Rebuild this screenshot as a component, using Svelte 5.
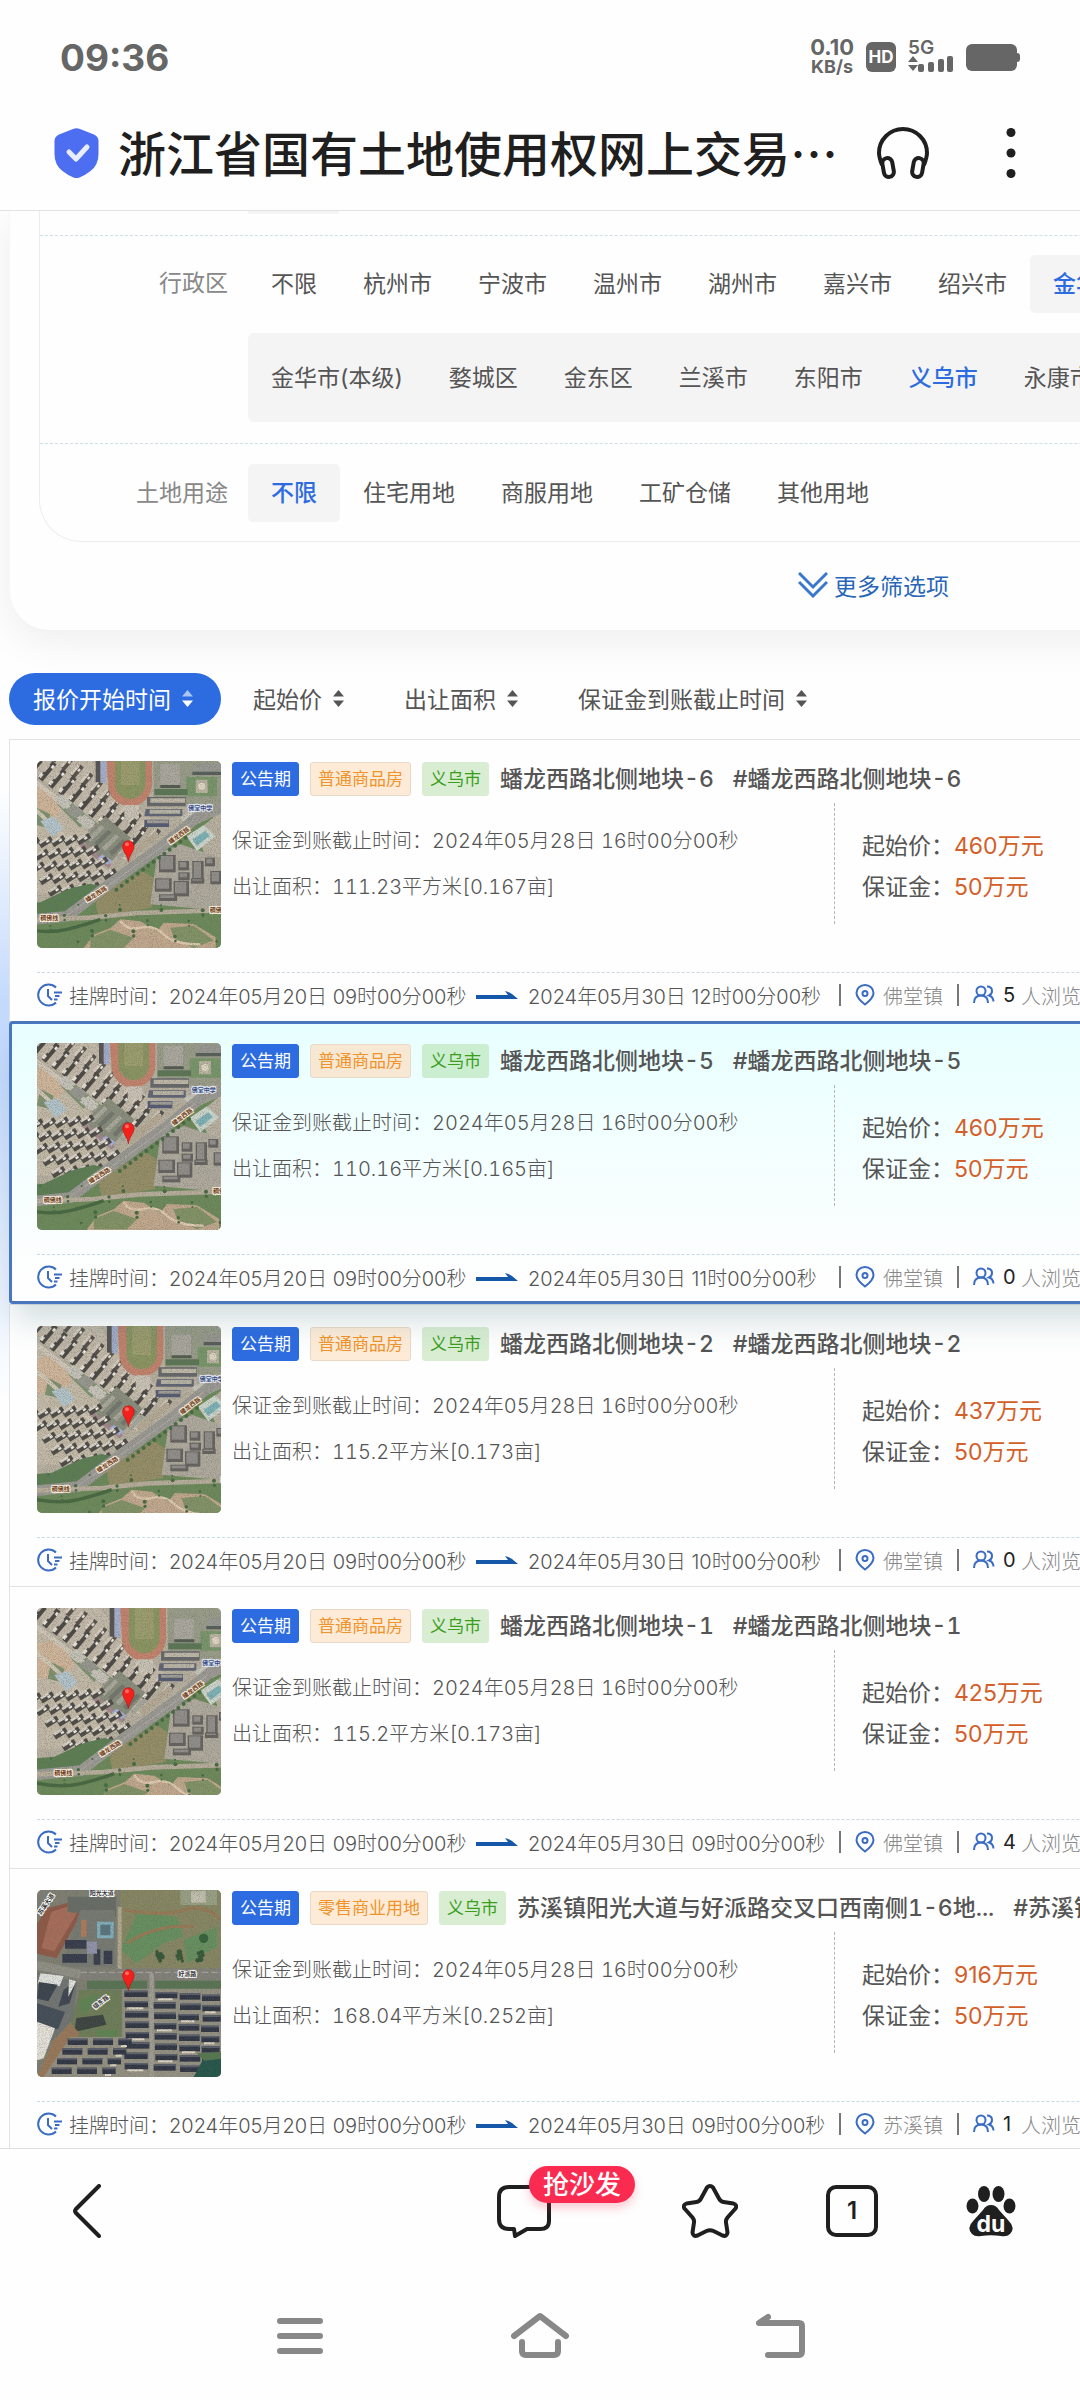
<script>
  const cities = ['不限', '杭州市', '宁波市', '温州市', '湖州市', '嘉兴市', '绍兴市', '金华市'];
  const districts = ['金华市(本级)', '婺城区', '金东区', '兰溪市', '东阳市', '义乌市', '永康市'];
  const uses = ['不限', '住宅用地', '商服用地', '工矿仓储', '其他用地'];
  const sorts = ['报价开始时间', '起始价', '出让面积', '保证金到账截止时间'];

  let city = $state('金华市');
  let district = $state('义乌市');
  let use = $state('不限');
  let sort = $state('报价开始时间');

  const lots = [
    { kind: '普通商品房', title: '蟠龙西路北侧地块-6', sub: '#蟠龙西路北侧地块-6', area: '111.23平方米[0.167亩]', price: '460', end: '12', town: '佛堂镇', views: 5, view: '0 0 552 561' },
    { kind: '普通商品房', title: '蟠龙西路北侧地块-5', sub: '#蟠龙西路北侧地块-5', area: '110.16平方米[0.165亩]', price: '460', end: '11', town: '佛堂镇', views: 0, view: '-10 2 552 561', active: true },
    { kind: '普通商品房', title: '蟠龙西路北侧地块-2', sub: '#蟠龙西路北侧地块-2', area: '115.2平方米[0.173亩]', price: '437', end: '10', town: '佛堂镇', views: 0, view: '-34 -16 552 561' },
    { kind: '普通商品房', title: '蟠龙西路北侧地块-1', sub: '#蟠龙西路北侧地块-1', area: '115.2平方米[0.173亩]', price: '425', end: '09', town: '佛堂镇', views: 4, view: '-42 -22 552 561' },
    { kind: '零售商业用地', title: '苏溪镇阳光大道与好派路交叉口西南侧1-6地...', sub: '#苏溪镇阳光大道与好派路交叉口西南侧1-6地块', area: '168.04平方米[0.252亩]', price: '916', end: '09', town: '苏溪镇', views: 1, view: '0 0 552 561', south: true }
  ];

  const range = (n) => Array.from({ length: n }, (_, i) => i);
  const blocks = [];
  for (const r of range(8)) {
    for (const c of range(4)) {
      const left = [262, 350, 424, 492][c];
      blocks.push([left + ((r * 7 + c * 5) % 6), 302 + r * 31 + c * 4, [70, 66, 62, 54][c]]);
    }
  }
  for (const r of range(4)) {
    for (const c of range(3)) blocks.push([92 - r * 16 + c * 76, 446 + r * 29, c === 2 ? 40 : 60]);
  }
</script>

{#snippet pin()}
  <path d="M274 302c-3-22-17-30-17-46a17 17 0 0 1 34 0c0 16-14 24-17 46z" fill="#f3201c" stroke="#b41412" stroke-width="2" />
  <circle cx="270" cy="250" r="6" fill="#ff6a62" />
{/snippet}

{#snippet roadMap(view)}
  <svg class="map" viewBox={view} preserveAspectRatio="xMidYMid slice" role="img" aria-label="地块卫星图">
    <rect x="-60" y="-60" width="680" height="700" fill="#b8b1a1" />
    <path d="M-60 20L0 70l120 110 90 100-60 80-90 40L-60 400z" fill="#c4baa8" />
    <path d="M-50 90l60-20 70 60-30 50-100 10z" fill="#d0b69b" />
    <path d="M60 130l40-30 60 60-30 40zM150 170l40-18 60 50-20 40zM0 140l40 20-10 40-40-10z" fill="#7f9270" />
    <path d="M-60-10L0 42l255 205 95-70-60-40L110-60H-60z" fill="#c4baaa" />
    {#each range(13) as i}
      <g transform="translate({-58 + i * 30} {-36 + i * 22}) rotate(-50)">
        <rect x="-34" y="-8" width="66" height="16" fill="#4b4743" />
        <rect x="-30" y="-12" width="14" height="10" fill="#e8e2d8" />
        <rect x="-8" y="-14" width="26" height="10" fill="#c6bdb1" />
        <rect x="14" y="0" width="10" height="8" fill="#f0ece4" />
      </g>
      <g transform="translate({6 + i * 29} {-66 + i * 24}) rotate(-50)">
        <rect x="-24" y="-6" width="44" height="13" fill="#57514b" />
        <rect x="-20" y="-12" width="34" height="8" fill="#d8cec0" />
        <rect x="0" y="-2" width="9" height="7" fill="#ece6dc" />
      </g>
    {/each}
    <path d="M-60 22L0 66l100 78 170 150" fill="none" stroke="#d0c7b8" stroke-width="14" />
    <path d="M-60 100L0 150l90 85 130 110" fill="none" stroke="#d0c7b6" stroke-width="12" />
    {#each range(5) as i}
      <path d="M{50 + i * 34} {118 + i * 30}l26-18 32 26-28 18z" fill={i % 2 ? '#979990' : '#c6c4ba'} />
    {/each}
    <path d="M135 238l70-72 78 66-72 84z" fill="#8a8e7d" />
    {#each range(5) as i}
      <path d="M{150 + i * 22} {232 + i * 14}l42-40 10 8-42 42z" fill={i % 2 ? '#73776e' : '#a9a89c'} />
    {/each}
    <path d="M128 255l86 66 10-10-88-68z" fill="#a3868a" />
    <path d="M182 292l30 20 14-12-30-20z" fill="#a8b1da" />
    <path d="M10 180l40-14 30 36-34 26z" fill="#b4c5cc" />
    {#each range(5) as r}
      {#each range(6) as c}
        <g transform="translate({-50 + c * 38 + r * 26} {250 + r * 35 - c * 3}) rotate(-32)">
          <rect x="-20" y="-9" width="42" height="17" fill="#4d4a46" />
          <rect x="-17" y="-12" width="28" height="8" fill="#d8d1c6" />
          <rect x="2" y="-3" width="10" height="7" fill="#f2eee7" />
        </g>
      {/each}
    {/each}
    <path d="M205-60h140V70a66 66 0 0 1-132 0z" fill="#c4836d" />
    <path d="M234-60h92V68a46 46 0 0 1-92 0z" fill="#8b9562" />
    <path d="M252-60h56V72h-56z" fill="#9c9e6e" />
    <path d="M190-60h18V66h-18z" fill="#a4afce" />
    <path d="M176-60h14V64h-14z" fill="#555353" />
    <path d="M262 132h44v40h-44z" fill="#cbc4b7" />
    <path d="M350-60h260V130H350z" fill="#999d89" />
    <path d="M370 10h58v62h-58z" fill="#aba89f" /><path d="M370 72h60v9h-60z" fill="#535a50" />
    <path d="M448 48h92v58h-92z" fill="#78966a" />
    <path d="M476 56h36v40h-36z" fill="#b8b4a0" /><circle cx="494" cy="76" r="11" fill="#e0d8c4" />
    <path d="M470 8h90v30h-90z" fill="#999993" /><path d="M466 32h90v10h-90z" fill="#565e5a" />
    <path d="M352 84h100v18H352z" fill="#5b7655" />
    <path d="M330 108h116v28H330z" fill="#66676a" /><path d="M340 112h104v13H340z" fill="#c0b9aa" />
    <path d="M326 144h110v22H322z" fill="#606474" /><path d="M338 146h92v12h-92z" fill="#b8b4a6" />
    <path d="M322 176h74v22h-74z" fill="#545a72" /><path d="M330 178h64v9h-64z" fill="#a29e98" />
    <path d="M430 168l60-30h60v24l-90 50z" fill="#c7c4ba" />
    <path d="M-60 480l130-10 145-85L370 275l110-86 130-60v460H-60z" fill="#6c8a5a" />
    <path d="M175 420l70-50 70-40 35 20-6 90-160 26z" fill="#958e66" />
    <path d="M-60 430l70-6 90-42 60-14 50 10-90 70-60 18-120 6z" fill="#5c7e53" />
    <path d="M480 210l72-60h60v190h-92z" fill="#bab2a2" />
    <path d="M360 280l70-30 120 40 60 0v110l-50 50-220-20z" fill="#b0ab9e" />
    {#each [[366, 282, 50, 52], [424, 300, 32, 28], [424, 334, 34, 24], [466, 300, 34, 60], [504, 290, 30, 26], [354, 352, 50, 40], [410, 360, 46, 46], [366, 400, 54, 20], [462, 352, 40, 16], [520, 330, 34, 40]] as b}
      <rect x={b[0]} y={b[1]} width={b[2]} height={b[3]} fill="#65625f" />
      <rect x={b[0] + 4} y={b[1] + 3} width={b[2] - 12} height={b[3] - 12} fill="#928e8b" />
    {/each}
    <path d="M448 226l52-34 36 34-56 44z" fill="#cdd6cd" /><path d="M466 236l38-26 14 14-38 30z" fill="#7db2b6" />
    <path d="M-60 480l150-14L230 360 380 252l96-80 140-60" fill="none" stroke="#9c9a94" stroke-width="32" />
    <path d="M80 470L230 362 380 254l90-76" fill="none" stroke="#bdbab2" stroke-width="2" />
    <path d="M262 286l92-74 12 14-90 76z" fill="#b6aa96" />
    <path d="M-60 478l220-8 140-14 310-10" fill="none" stroke="#b8ae9c" stroke-width="14" />
    <path d="M-60 500q90 20 150 5t100-30" fill="none" stroke="#466840" stroke-width="10" />
    <path d="M140 561l30-40 50-20 30-26 60 6 50 30 20-26 90 4 66 40v100H140z" fill="#c2a98d" />
    <path d="M160 530l60-24 70 24-30 31H160zM400 500l70-6 60 44-60 23-60-30z" fill="#829366" />
    <path d="M250 480q20 30 60 20t70 20 110 30" fill="none" stroke="#e0cbb0" stroke-width="7" />
    {#each range(26) as i}
      <circle cx={(i * 83) % 540} cy={430 + ((i * 47) % 125)} r={3 + (i % 4)} fill="#466a42" />
    {/each}
    {#each range(14) as i}
      <circle cx={238 + i * 16} cy={386 - i * 12} r="6" fill="#466a42" />
    {/each}
    <rect class="grain" x="-60" y="-60" width="680" height="700" filter="url(#grain)" />
    <g class="road">
      <text transform="translate(400 250) rotate(-36)">蟠龙西路</text>
      <text transform="translate(150 424) rotate(-32)">蟠龙西路</text>
      <text x="10" y="478">稠佛线</text>
      <text x="518" y="452">稠佛线</text>
      <text class="school" x="454" y="148">佛堂中学</text>
    </g>
    <svg x={view.split(' ')[0]} y={view.split(' ')[1]} width="552" height="561" viewBox="0 0 552 561">{@render pin()}</svg>
  </svg>
{/snippet}

{#snippet townMap()}
  <svg class="map" viewBox="0 0 552 561" preserveAspectRatio="xMidYMid slice" role="img" aria-label="地块卫星图">
    <rect width="552" height="561" fill="#7f8073" />
    <path d="M250 0h302v235H250z" fill="#878763" />
    <path d="M300 70l120 10 20 60-60 20-80 60-50-40zM440 150l100-40v60l-90 50z" fill="#66905f" />
    <path d="M262 60q120 20 180 0t110 30M270 160q90-60 200-50" fill="none" stroke="#977a56" stroke-width="9" />
    <path d="M430 0h110v45H430z" fill="#98a184" /><path d="M462 4h44v34h-44z" fill="#c4c1b1" />
    <path d="M30 55l75-20 34 25-80 145-59-14v-90z" fill="#8f5947" />
    <path d="M42 66l56-18 24 18-70 118-38-10z" fill="#a86d5a" />
    <path d="M92 20h145v60L92 66z" fill="#676d66" />
    <path d="M130 60h104v170H70l20-50z" fill="#777a73" />
    <path d="M180 95h50v50h-50z" fill="#81b1be" /><path d="M190 104h30v32h-30z" fill="#58757d" />
    <path d="M84 150h64v26H84zM76 192h74v26H76zM170 178h20v46h-20zM200 182h26v40h-26z" fill="#363b4b" />
    <path d="M150 155h30v36h-30z" fill="#9294ae" /><path d="M132 90h16v50h-16z" fill="#ad7b59" />
    <path d="M248 50v190" stroke="#b2a890" stroke-width="12" />
    <path d="M0 236h552v34H120L0 240z" fill="#82827a" />
    <path d="M130 247h422" stroke="#b0aea2" stroke-width="3" stroke-dasharray="20 8" />
    <path d="M0 225l130 28" stroke="#929187" stroke-width="26" />
    <path d="M150 272h180v26H150zM355 272h197v30H355z" fill="#597453" />
    <path d="M0 246l120 30-10 110L0 500z" fill="#717573" />
    <path d="M10 250l70 8-12 30-66-8z" fill="#e2e4e0" /><path d="M6 276l56 8-28 50-34-8z" fill="#3b434d" />
    <path d="M80 300l38-30-20 70-34 10z" fill="#3e4550" /><path d="M96 268l22 6-24 46z" fill="#e6e6e0" />
    <path d="M0 340l84 26-20 50L0 430z" fill="#434d58" />
    <path d="M0 395l54 20-34 90-20 6z" fill="#e6e3db" />
    <path d="M128 300h126v150H90z" fill="#6e7e58" />
    <path d="M126 330l60-20-46 70zM180 420h60v22h-60z" fill="#5f8453" />
    <path d="M118 384l80-10 10 30-96 22z" fill="#3c4340" />
    <path d="M100 400l28 30-90 131H0l50-110z" fill="#997859" />
    <path d="M256 296h296v265H20l80-120h156z" fill="#959284" />
    <path d="M344 250v311" stroke="#a19e95" stroke-width="13" />
    {#each blocks as [x, y, w], i}
      <rect {x} {y} width={w} height="19" fill="#303544" />
      <rect {x} {y} width={w} height="5" fill="#5b606d" />
      {#if i % 3 === 1}<rect x={x + 8} y={y + 19} width={w - 22} height="6" fill="#e0d8c8" />{/if}
    {/each}
    <path d="M552 495l-50 6-32 60h82z" fill="#23554a" />
    <path d="M480 490l72-4v20l-50 6z" fill="#56784e" />
    {#each range(18) as i}
      <circle cx={360 + ((i * 61) % 180)} cy={185 + ((i * 13) % 30)} r={5 + (i % 4)} fill="#345636" />
    {/each}
    <circle cx="500" cy="145" r="14" fill="#356239" />
    <rect class="grain" width="552" height="561" filter="url(#grain)" />
    <g class="road plain">
      <text x="424" y="258">好派路</text>
      <text transform="translate(174 358) rotate(-38)">镇东路</text>
      <text transform="translate(12 76) rotate(-56)">苏溪大道</text>
      <text x="158" y="16">阳光大道</text>
    </g>
    {@render pin()}
  </svg>
{/snippet}

{#snippet sorter()}
  <svg class="sorter" viewBox="0 0 11 17" aria-hidden="true"><path class="up" d="M5.5 0L11 6.500H0z" /><path d="M5.500 17L0 10.500h11z" /></svg>
{/snippet}

<svg class="defs" aria-hidden="true">
  <filter id="grain" x="0" y="0" width="100%" height="100%">
    <feTurbulence type="fractalNoise" baseFrequency="0.35" numOctaves="3" seed="4" />
    <feColorMatrix values="0 0 0 0 0.12  0 0 0 0 0.12  0 0 0 0 0.1  2.4 0 0 0 -1" />
  </filter>
</svg>

<div class="app" lang="zh-CN">
  <div class="status">
    <time>09:36</time>
    <div class="signals">
      <span class="speed"><span>0.10</span><span>KB/s</span></span>
      <span class="hd">HD</span>
      <span class="cell">
        <span>5G</span>
        <svg viewBox="0 0 46 18" width="46" height="18" aria-hidden="true">
          <path d="M0 7l5-6 5 6zM0 10h10l-5 6z" />
          <rect x="10" y="9" width="6" height="8" rx="2" /><rect x="20" y="7" width="6" height="10" rx="2" /><rect x="30" y="4" width="6" height="13" rx="2" /><rect x="39" y="1" width="6" height="16" rx="2" />
        </svg>
      </span>
      <svg viewBox="0 0 54 27" width="54" height="27" aria-label="电池"><rect width="51" height="27" rx="6" /><path d="M50 9h1a3 3 0 0 1 3 3v3a3 3 0 0 1-3 3h-1z" /></svg>
    </div>
  </div>

  <header>
    <svg class="shield" viewBox="0 0 45 50" width="45" height="50" aria-label="安全网站">
      <path d="M19 1q3.500-1.500 7 0l14 5.500q4.500 2 4.500 6.500v13q0 11-8 17-5 4-11 6.500-3 1-6 0-6-2.500-11-6.500-8-6-8-17V13q0-4.500 4.500-6.500z" fill="#4e6ef2" />
      <path d="M15 24l7 7 11-12" fill="none" stroke="#e8edff" stroke-width="5" stroke-linecap="round" stroke-linejoin="round" />
    </svg>
    <h1>浙江省国有土地使用权网上交易…</h1>
    <button aria-label="收听">
      <svg viewBox="0 0 52 52" width="52" height="52" fill="none" stroke="#1f1f1f" stroke-width="4">
        <path d="M5 38Q2 30 2 26a24 24 0 0 1 48 0q0 4-3 12" />
        <rect x="6" y="31" width="10" height="19" rx="5" transform="rotate(-10 11 40)" />
        <rect x="36" y="31" width="10" height="19" rx="5" transform="rotate(10 41 40)" />
      </svg>
    </button>
    <button class="more" aria-label="更多">
      <svg viewBox="0 0 10 52" width="10" height="52" fill="#1f1f1f"><circle cx="5" cy="5.500" r="4.500" /><circle cx="5" cy="26" r="4.500" /><circle cx="5" cy="46.500" r="4.500" /></svg>
    </button>
  </header>

  <main>
    <div class="page">
      <section class="filters">
        <div class="panel">
          <div class="previous"><i></i></div>
          <div class="row">
            <span class="label top">行政区</span>
            <div class="choices">
              <div class="chips">
                {#each cities as c}<button class:on={city === c} onclick={() => (city = c)}>{c}</button>{/each}
              </div>
              <div class="chips nested">
                {#each districts as d}<button class:on={district === d} onclick={() => (district = d)}>{d}</button>{/each}
              </div>
            </div>
          </div>
          <div class="row last">
            <span class="label">土地用途</span>
            <div class="chips">
              {#each uses as u}<button class:on={use === u} onclick={() => (use = u)}>{u}</button>{/each}
            </div>
          </div>
        </div>
        <button class="expand">
          <svg viewBox="0 0 30 26" width="30" height="26" fill="none" stroke="#3a78cf" stroke-width="3"><path d="M1 1l14 14L29 1M1 10l14 14 14-14" /></svg>
          更多筛选项
        </button>
      </section>

      <section class="results">
        <div class="sorts">
          {#each sorts as s}<button class:on={sort === s} onclick={() => (sort = s)}>{s}{@render sorter()}</button>{/each}
        </div>

        {#each lots as lot}
          <article class:active={lot.active}>
            <div class="body">
              {#if lot.south}{@render townMap()}{:else}{@render roadMap(lot.view)}{/if}
              <div class="detail">
                <div class="heading">
                  <span class="tag stage">公告期</span>
                  <span class="tag kind">{lot.kind}</span>
                  <span class="tag place">义乌市</span>
                  <h2>{lot.title}</h2>
                  <h2 class="sub">{lot.sub}</h2>
                </div>
                <div class="columns">
                  <div class="info">
                    <p>保证金到账截止时间：2024年05月28日 16时00分00秒</p>
                    <p>出让面积：{lot.area}</p>
                  </div>
                  <div class="money">
                    <p>起始价：<b>{lot.price}万元</b></p>
                    <p>保证金：<b>50万元</b></p>
                  </div>
                </div>
              </div>
            </div>
            <footer>
              <svg class="clock" viewBox="0 0 25 24" width="25" height="24" fill="none" stroke="#3b6cc4" stroke-width="2">
                <path d="M19 4.500A10.500 10.500 0 1 0 19 19.500M11 6v7l4 4M17 9.500h8M18 13h4.500M17 16.500h3.500" />
              </svg>
              <span>挂牌时间：</span>
              <span class="when">2024年05月20日 09时00分00秒</span>
              <svg class="arrow" viewBox="0 0 42 8" width="42" height="8"><path d="M0 4h32L29 0q6 1 13 8H0z" fill="#1557a8" /></svg>
              <span class="when">2024年05月30日 {lot.end}时00分00秒</span>
              <i class="bar"></i>
              <svg class="spot" viewBox="0 0 20 22" width="20" height="22" fill="none" stroke="#3b6cc4" stroke-width="2"><path d="M10 20.500Q1.500 14 1.500 9a8.500 8 0 0 1 17 0q0 5-8.500 11.500z" /><circle cx="10" cy="9.500" r="2.500" /></svg>
              <span class="dim">{lot.town}</span>
              <i class="bar"></i>
              <svg class="people" viewBox="0 0 22 20" width="22" height="20" fill="none" stroke="#3b6cc4" stroke-width="2"><circle cx="8" cy="6" r="4.500" /><path d="M1 18q0-7.500 7-7.500t7 7.500M14 1.500q5 0 5 4.500 0 3-3 4.500 4 1 4.500 6" /></svg>
              <span class="count">{lot.views}</span>
              <span class="dim">人浏览</span>
            </footer>
          </article>
        {/each}
      </section>
    </div>
  </main>

  <nav class="tools" aria-label="浏览器工具栏">
    <button class="back" aria-label="返回"><svg viewBox="0 0 28 54" width="28" height="54" fill="none" stroke="#1f1f1f" stroke-width="4" stroke-linecap="round" stroke-linejoin="round"><path d="M26 2L3 25q-2 2 0 4l23 23" /></svg></button>
    <button class="comment" aria-label="评论">
      <svg viewBox="0 0 54 54" width="54" height="54" fill="none" stroke="#1f1f1f" stroke-width="4" stroke-linejoin="round"><path d="M12 3h30q10 0 10 10v24q0 8-9 8H30L18 52l-1-7h-5q-10 0-10-10V13Q2 3 12 3z" /></svg>
      <span class="badge">抢沙发</span>
    </button>
    <button aria-label="收藏"><svg viewBox="0 0 56 54" width="56" height="54" fill="none" stroke="#1f1f1f" stroke-width="4" stroke-linejoin="round"><path d="M25 3.500q3-3 6 0l6 11q1.500 3 4.500 3.500l10 1.500q4 1.500 2 5l-8 9q-2 2.500-1.500 5l1.500 10q-.5 4.500-5 3l-9-4.500q-3.500-1.500-7 0l-9 4.500q-4.500 1.500-5-3l1.500-10q.5-2.500-1.500-5l-8-9q-2-3.500 2-5l10-1.500q3-.5 4.500-3.500z" /></svg></button>
    <button class="tabs" aria-label="标签页">1</button>
    <button aria-label="百度首页">
      <svg viewBox="0 0 50 54" width="50" height="54" fill="#1f1f1f">
        <ellipse cx="18" cy="10" rx="6" ry="8" /><ellipse cx="32.500" cy="10" rx="6" ry="8" /><ellipse cx="6.500" cy="22" rx="6" ry="7.500" /><ellipse cx="43.500" cy="22" rx="6" ry="7.500" />
        <path d="M25 21q5 0 8 5l9 10q8 8 2 14-3 3-9 2-10-1.500-20 0-6 1-9-2-6-6 2-14l9-10q3-5 8-5z" />
        <text x="25" y="48" text-anchor="middle">du</text>
      </svg>
    </button>
  </nav>

  <nav class="system" aria-label="系统导航">
    <button aria-label="菜单"><svg viewBox="0 0 58 46" width="58" height="46" stroke="#888" stroke-width="6" stroke-linecap="round"><path d="M9 9h40M9 24h40M9 39h40" /></svg></button>
    <button aria-label="主页"><svg viewBox="0 0 58 46" width="58" height="46" fill="none" stroke="#888" stroke-width="6" stroke-linecap="round" stroke-linejoin="round"><path d="M3 24L29 4l26 20M11 30v9q0 4 4 4h28q4 0 4-4v-9" /></svg></button>
    <button aria-label="后退"><svg viewBox="0 0 58 46" width="58" height="46" fill="none" stroke="#888" stroke-width="6" stroke-linecap="round" stroke-linejoin="round"><path d="M17 5l-9 6h40q3 0 3 3v25q0 4-3 4H17" /></svg></button>
  </nav>
</div>

<style>
  :global(body) { margin: 0; background: #fefefe; }
  .app {
    display: flex; flex-direction: column; height: 100vh; overflow: hidden;
    background: #fefefe; color: #555; font-family: Inter, "Noto Sans CJK SC", sans-serif;
    font-size: 20px;
  }
  button { margin: 0; padding: 0; border: 0; background: none; color: inherit; font: inherit; white-space: nowrap; cursor: pointer; }
  svg { display: block; flex: none; }
  h1, h2, p { margin: 0; white-space: nowrap; }
  .defs { position: absolute; width: 0; height: 0; }

  .status { display: flex; justify-content: space-between; align-items: center; box-sizing: border-box; height: 96px; padding: 18px 60px 0; color: #666; }
  .status time { font-size: 37px; font-weight: 700; }
  .signals { display: flex; align-items: center; gap: 12px; fill: #666; font-weight: 700; }
  .speed { display: flex; flex-direction: column; align-items: center; font-size: 22px; line-height: 20px; }
  .speed span:last-child { font-size: 18px; }
  .hd { width: 30px; border-radius: 6px; background: #666; color: #fefefe; font-size: 17px; line-height: 30px; text-align: center; }
  .cell { display: flex; flex-direction: column; font-size: 19px; line-height: 14px; font-weight: 600; }

  header { display: flex; align-items: center; box-sizing: border-box; height: 115px; padding: 0 64px 0 54px; border-bottom: 1px solid #e2e2e2; }
  h1 { flex: 1; margin: 0 0 4px 19px; overflow: hidden; color: #1f1f1f; font: 500 48px/70px "Noto Sans CJK SC", sans-serif; }
  .more { margin-left: 77px; }

  main { flex: 1; min-height: 0; overflow: hidden; }
  .page { min-width: 1746px; }

  .filters { margin: 0 9px; padding: 0 29px; border-left: 1px solid #f7f7f7; border-radius: 0 0 40px 40px; background: #fefefe; box-shadow: 0 10px 40px rgba(0, 0, 0, 0.07); }
  .panel { border: 1px solid #ececec; border-top: 0; border-radius: 0 0 42px 42px; }
  .previous { padding: 0 0 21px 208px; border-bottom: 1px dashed #c6e2ea; }
  .previous i { display: block; width: 91px; height: 3px; background: #f4f4f4; }
  .row { display: flex; align-items: center; padding: 19px 0 21px; border-bottom: 1px dashed #c6e2ea; font-size: 23px; }
  .row.last { padding: 20px 0 19px; border: 0; }
  .label { width: 188px; margin-right: 20px; color: #888; line-height: 58px; text-align: right; }
  .label.top { align-self: flex-start; line-height: 56px; }
  .choices { flex: 1; }
  .chips { display: flex; }
  .chips button { padding: 0 23px; border-radius: 5px; line-height: 58px; }
  .chips .on { background: #f4f4f4; color: #2c6be0; font-weight: 500; }
  .nested { margin-top: 20px; padding: 16px 0 15px; border-radius: 6px; background: #f4f4f4; }
  .expand { display: flex; align-items: center; justify-content: center; gap: 6px; width: 100%; height: 88px; padding-bottom: 2px; color: #2866b8; font-size: 23px; }

  .results { padding: 43px 9px 0; background: linear-gradient(#fefefe00 160px, #c4dafd 370px, #c4dafd 450px, #fefefe00 770px); }
  .sorts { display: flex; gap: 8px; margin-bottom: 14px; }
  .sorts button { display: flex; align-items: center; gap: 11px; height: 52px; padding: 0 28px 2px 24px; border-radius: 26px; font-size: 23px; }
  .sorts .on { background: #2c6be0; color: #fff; }
  .sorter { width: 11px; height: 17px; fill: currentColor; }
  .on .up { opacity: 0.6; }

  article { padding: 21px 27px 4px; border: 1px solid #e0e3e6; border-bottom: 0; background: #fefefe; }
  article.active { position: relative; padding: 19px 25px 2px; border: 3px solid #4a76bd; border-radius: 4px; background: linear-gradient(#e8ffff, #fefefe 90%); box-shadow: 0 22px 30px -6px rgba(70, 115, 125, 0.24); }
  .body { display: flex; gap: 11px; }
  .map { width: 184px; height: 187px; border-radius: 5px; overflow: hidden; }
  .grain { opacity: 0.4; }
  .road text { fill: #6b3a1a; stroke: #fbf3df; stroke-width: 5px; paint-order: stroke; font-size: 18px; font-weight: 700; }
  .plain text { fill: #333; stroke: #fff; }
  .road .school { fill: #34497c; stroke: #e6ebf5; }
  .detail { flex: 1; }
  .heading { display: flex; align-items: center; gap: 11px; }
  .tag { box-sizing: border-box; height: 34px; padding: 0 7px; border: 1px solid; border-radius: 3px; font-size: 17px; line-height: 32px; white-space: nowrap; }
  .stage { border-color: #2c6be0; background: #2c6be0; color: #fff; }
  .kind { border-color: #ead9c8; background: #fdebd8; color: #f0932b; }
  .place { border-color: #d8edd2; background: #d8edd2; color: #3a9d1c; }
  .active .kind { background: #f7e8d4; }
  .active .place { border-color: #caeecf; background: #caeecf; }
  h2 { font-size: 23px; line-height: 36px; font-weight: 500; font-variant-numeric: tabular-nums; }
  .sub { margin-left: 8px; }
  .columns { display: flex; align-items: flex-start; }
  .info { width: 602px; padding-top: 21px; line-height: 46px; font-weight: 300; font-variant-numeric: tabular-nums; }
  .money { height: 98px; margin-top: 6px; padding: 23px 0 0 27px; border-left: 1px dashed #b5b5b5; font-size: 23px; line-height: 41px; }
  .money b { color: #d3602a; font-weight: 400; }
  footer { display: flex; align-items: center; height: 44px; margin-top: 24px; border-top: 1px dashed #c5dce4; white-space: nowrap; font-weight: 300; }
  .clock { margin-right: 7px; }
  .when { width: 297px; }
  .arrow { margin: 0 10px; }
  .bar { width: 2px; height: 22px; margin: 0 14px; background: #777; }
  .spot, .people { margin-right: 8px; }
  .dim { color: #888; }
  .count { width: 12px; margin-right: 6px; color: #222; font-weight: 400; }

  .tools { display: flex; align-items: center; gap: 88px; height: 123px; padding: 0 64px 2px 73px; border-top: 1px solid #dedede; background: #fefefe; }
  .back { margin-right: auto; }
  .comment { position: relative; margin-right: 43px; }
  .badge { position: absolute; top: -18px; left: 32px; padding: 0 14px; border-radius: 19px; background: #fb2a50; box-shadow: 0 5px 10px rgba(251, 42, 80, 0.25); color: #fff; font-size: 26px; line-height: 37px; font-weight: 500; }
  .tabs { box-sizing: border-box; width: 52px; height: 52px; border: 4px solid #1f1f1f; border-radius: 10px; color: #1f1f1f; font-size: 24px; font-weight: 600; }
  .tools text { fill: #fefefe; font-size: 23px; font-weight: 700; }
  .system { display: flex; align-items: center; justify-content: center; gap: 182px; height: 122px; padding-bottom: 4px; }
</style>
